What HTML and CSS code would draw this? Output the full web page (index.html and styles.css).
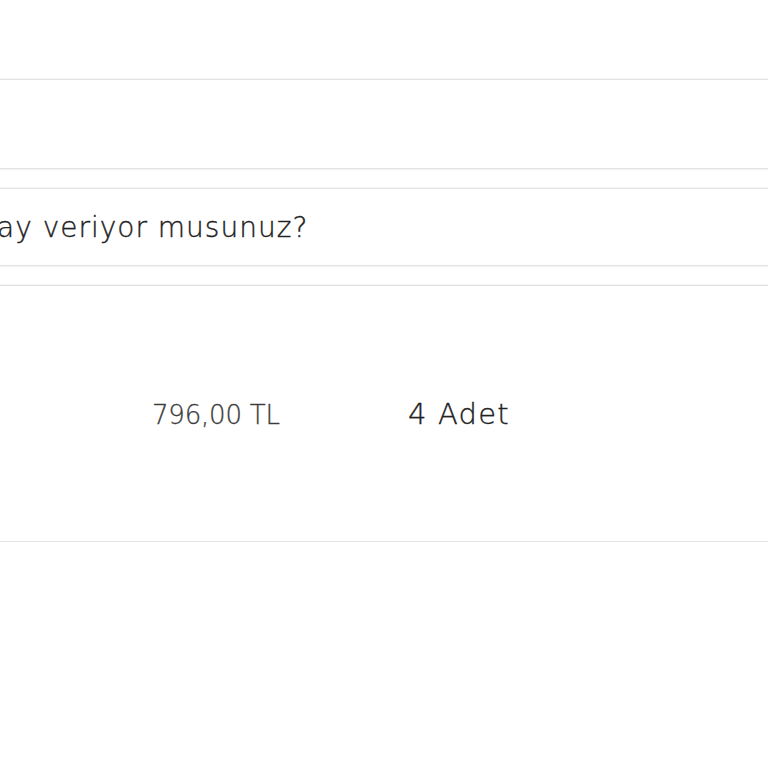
FILE: index.html
```html
<!DOCTYPE html>
<html lang="tr">
<head>
<meta charset="utf-8">
<link rel="stylesheet" href="styles.css">
</head>
<body>
<div class="page">
  <div class="panel panel-empty"></div>
  <div class="panel panel-question">
    <p class="question">ay veriyor musunuz?</p>
  </div>
  <div class="panel panel-order">
    <div class="order-row">
      <span class="price">796,00 TL</span>
      <span class="qty">4 Adet</span>
    </div>
  </div>
</div>
</body>
</html>
```
FILE: styles.css
```css
html, body {
  margin: 0;
  padding: 0;
  background: #ffffff;
}
body {
  font-family: "DejaVu Sans", "Liberation Sans", sans-serif;
  overflow: hidden;
}
.page {
  display: flex;
  flex-direction: column;
  gap: 19px;
  padding-top: 79px;
}
.panel {
  border-top: 1px solid #e3e3e3;
  border-bottom: 1px solid #e3e3e3;
  box-shadow: 0 1px 1px #f3f3f3, 0 -1px 1px #f6f6f6;
  background: #fff;
}
.panel-empty {
  height: 88px;
}
.panel-question {
  height: 76px;
  display: flex;
  align-items: center;
}
.question {
  margin: 0 0 0 -3px;
  font-size: 28px;
  font-weight: 300;
  color: #222;
  letter-spacing: 1px;
  white-space: nowrap;
  -webkit-text-stroke: 0.35px #222;
}
.panel-order {
  height: 255px;
  display: flex;
  align-items: center;
}
.order-row {
  display: flex;
  align-items: baseline;
  padding-left: 152px;
}
.price {
  width: 256px;
  font-size: 26px;
  font-weight: 300;
  color: #3c3c3c;
  letter-spacing: -0.2px;
  -webkit-text-stroke: 0.3px #3c3c3c;
}
.qty {
  font-size: 29px;
  font-weight: 300;
  color: #222;
  letter-spacing: 1.2px;
  -webkit-text-stroke: 0.35px #222;
}
```
